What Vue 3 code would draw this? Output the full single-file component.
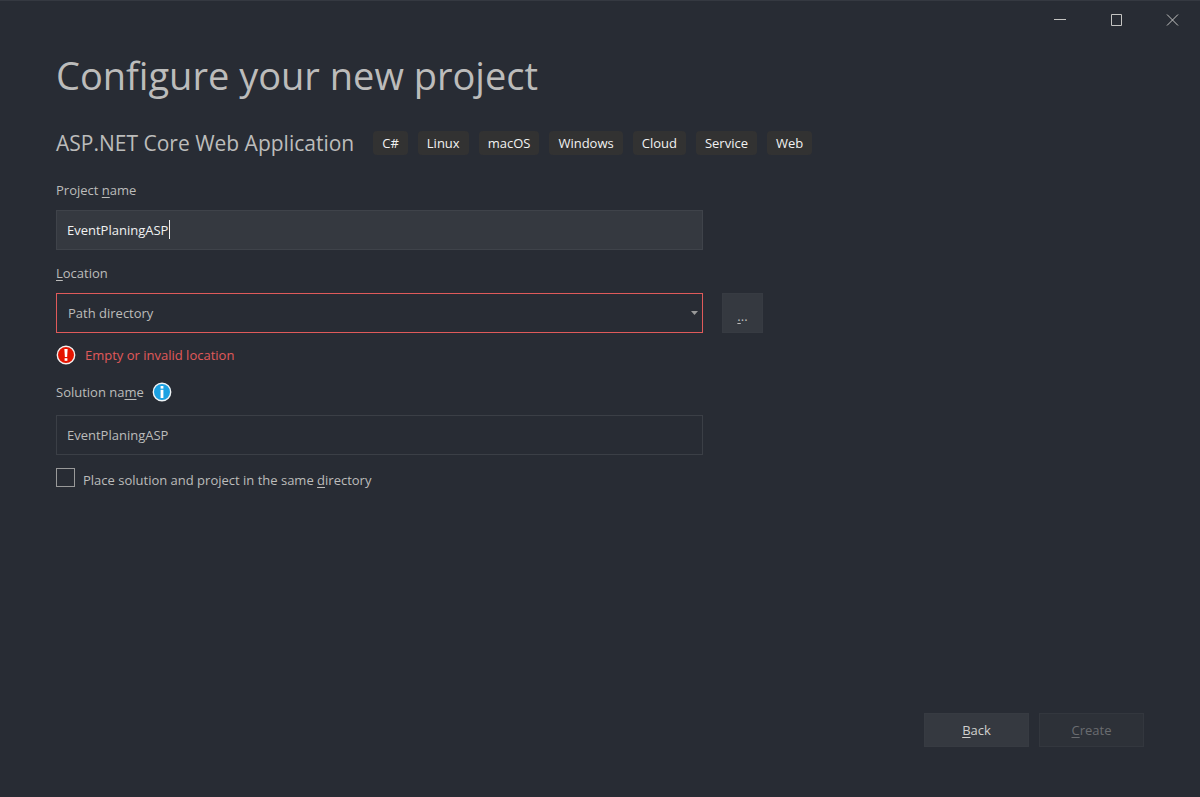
<script setup>
import { ref } from 'vue'

const tags = ['C#', 'Linux', 'macOS', 'Windows', 'Cloud', 'Service', 'Web']
const projectName = ref('EventPlaningASP')
const solutionName = ref('EventPlaningASP')
const location = ref('Path directory')
const sameDirectory = ref(false)
</script>

<template>
  <div class="window">
    <header class="titlebar">
      <button class="caption" type="button" aria-label="Minimize">
        <svg width="14" height="14" viewBox="0 0 14 14"><path d="M1 6.5H13" /></svg>
      </button>
      <button class="caption" type="button" aria-label="Maximize">
        <svg width="14" height="14" viewBox="0 0 14 14"><path d="M2.5 1.5H12.5V12.5H2.5Z" /></svg>
      </button>
      <button class="caption" type="button" aria-label="Close">
        <svg width="14" height="14" viewBox="0 0 14 14"><path d="M2 1.5L13 12.5M13 1.5L2 12.5" /></svg>
      </button>
    </header>

    <main class="content">
      <h1>Configure your new project</h1>

      <div class="template">
        <h2>ASP.NET Core Web Application</h2>
        <ul class="tags">
          <li v-for="tag in tags" :key="tag">{{ tag }}</li>
        </ul>
      </div>

      <form class="form" @submit.prevent>
        <label class="label" for="project">Project <u>n</u>ame</label>
        <div class="field focused">
          <input id="project" v-model="projectName" type="text" spellcheck="false" />
          <span class="caret"></span>
        </div>

        <label class="label" for="location"><u>L</u>ocation</label>
        <div class="location">
          <div class="field invalid">
            <select id="location" v-model="location" aria-invalid="true" aria-describedby="location-error">
              <option>Path directory</option>
            </select>
            <svg class="arrow" width="7" height="4" viewBox="0 0 7 4"><path d="M0 0H7L3.5 4Z" /></svg>
          </div>
          <button class="browse" type="button" aria-label="Browse"><u>.</u>..</button>
        </div>

        <p id="location-error" class="error">
          <svg width="20" height="20" viewBox="0 0 20 20">
            <circle cx="10" cy="10" r="8.7" fill="#e51400" stroke="#f3efee" stroke-width="1.4" />
            <path d="M8.4 4H11.6L11.1 12H8.9Z" fill="#fff" />
            <rect x="8.6" y="13.2" width="2.8" height="2.6" fill="#fff" />
          </svg>
          <span>Empty or invalid location</span>
        </p>

        <div class="label with-info">
          <label for="solution">Solution na<u>m</u>e</label>
          <svg width="20" height="20" viewBox="0 0 20 20">
            <circle cx="10" cy="10" r="8.7" fill="#1ba1e2" stroke="#f0f4f6" stroke-width="1.4" />
            <rect x="8.6" y="4" width="2.8" height="2.6" fill="#fff" />
            <rect x="8.6" y="7.8" width="2.8" height="8.2" fill="#fff" />
          </svg>
        </div>
        <div class="field">
          <input id="solution" v-model="solutionName" type="text" spellcheck="false" />
        </div>

        <div class="check">
          <input id="same" v-model="sameDirectory" type="checkbox" />
          <label for="same">Place solution and project in the same <u>d</u>irectory</label>
        </div>
      </form>
    </main>

    <footer class="actions">
      <button class="action" type="button"><span><u>B</u>ack</span></button>
      <button class="action" type="button" disabled><span><u>C</u>reate</span></button>
    </footer>
  </div>
</template>

<style>
body {
  background: #282c34;
}
</style>

<style scoped>
.window {
  box-sizing: border-box;
  min-height: 100vh;
  display: flex;
  flex-direction: column;
  border-top: 1px solid #353941;
  background: #282c34;
  color: #bcbcbb;
  font-family: "Open Sans", "Noto Sans", sans-serif;
  font-size: 13px;
  line-height: 20px;
}

button,
input,
select {
  box-sizing: border-box;
  margin: 0;
  font: inherit;
  color: inherit;
}

u {
  text-decoration-thickness: 1px;
  text-underline-offset: 2px;
}

svg {
  display: block;
  flex: none;
}

.titlebar {
  display: flex;
  justify-content: flex-end;
}

.caption {
  display: flex;
  align-items: center;
  justify-content: center;
  width: 56px;
  height: 37px;
  padding: 0;
  border: 0;
  background: none;
}

.caption svg {
  fill: none;
  stroke: #c4c4c2;
}

.content {
  flex: 1;
  padding: 11px 56px 0;
}

h1 {
  margin: 0;
  font-size: 38px;
  font-weight: 400;
  line-height: 52px;
}

.template {
  display: flex;
  align-items: center;
  gap: 19px;
  margin-top: 26px;
}

h2 {
  margin: 0;
  font-size: 21px;
  font-weight: 400;
  line-height: 32px;
}

.tags {
  display: flex;
  gap: 10px;
  margin: 0;
  padding: 0;
  list-style: none;
}

.tags li {
  padding: 2px 9px;
  border-radius: 4px;
  background: #323232;
  color: #f1f1f1;
}

.form {
  max-width: 647px;
  margin-top: 21px;
}

.label {
  display: block;
  margin-bottom: 10px;
}

.field {
  position: relative;
  height: 40px;
  margin-bottom: 13px;
}

.field input,
.field select {
  width: 100%;
  height: 100%;
  padding: 0 10px;
  border: 1px solid #3b3f46;
  border-radius: 0;
  outline: 0;
  background: #282c34;
  appearance: none;
}

.focused input {
  background: #353940;
  border-color: #3f434a;
  color: #f1f1f1;
}

.caret {
  position: absolute;
  top: 10px;
  left: 113px;
  width: 1px;
  height: 19px;
  background: #f1f1f1;
}

.location {
  display: grid;
  grid-template-columns: 100% 41px;
  gap: 19px;
}

.invalid {
  margin-bottom: 12px;
}

.invalid select {
  padding: 0 11px;
  border-color: #e05a5a;
}

.arrow {
  position: absolute;
  top: 18px;
  right: 5px;
  fill: #999;
  pointer-events: none;
}

.browse {
  height: 40px;
  padding: 6px 0 0;
  border: 1px solid #373b42;
  background: #353940;
}

.error {
  display: flex;
  align-items: center;
  gap: 9px;
  margin: 0 0 17px;
  color: #e05a5a;
}

.with-info {
  display: flex;
  align-items: center;
  gap: 8px;
  margin-bottom: 13px;
}

.check {
  display: flex;
  align-items: flex-start;
  gap: 8px;
  line-height: 24px;
}

.check input {
  width: 19px;
  height: 19px;
  border: 1px solid #999;
  background: transparent;
  appearance: none;
}

.actions {
  display: flex;
  justify-content: flex-end;
  gap: 10px;
  padding: 0 56px 50px;
}

.action {
  width: 105px;
  height: 34px;
  padding: 0;
  border: 1px solid #373b42;
  background: #353940;
  color: #d0d0ce;
}

.action:disabled {
  border-color: #33373e;
  background: #2d3138;
  color: #6a6c70;
}
</style>
